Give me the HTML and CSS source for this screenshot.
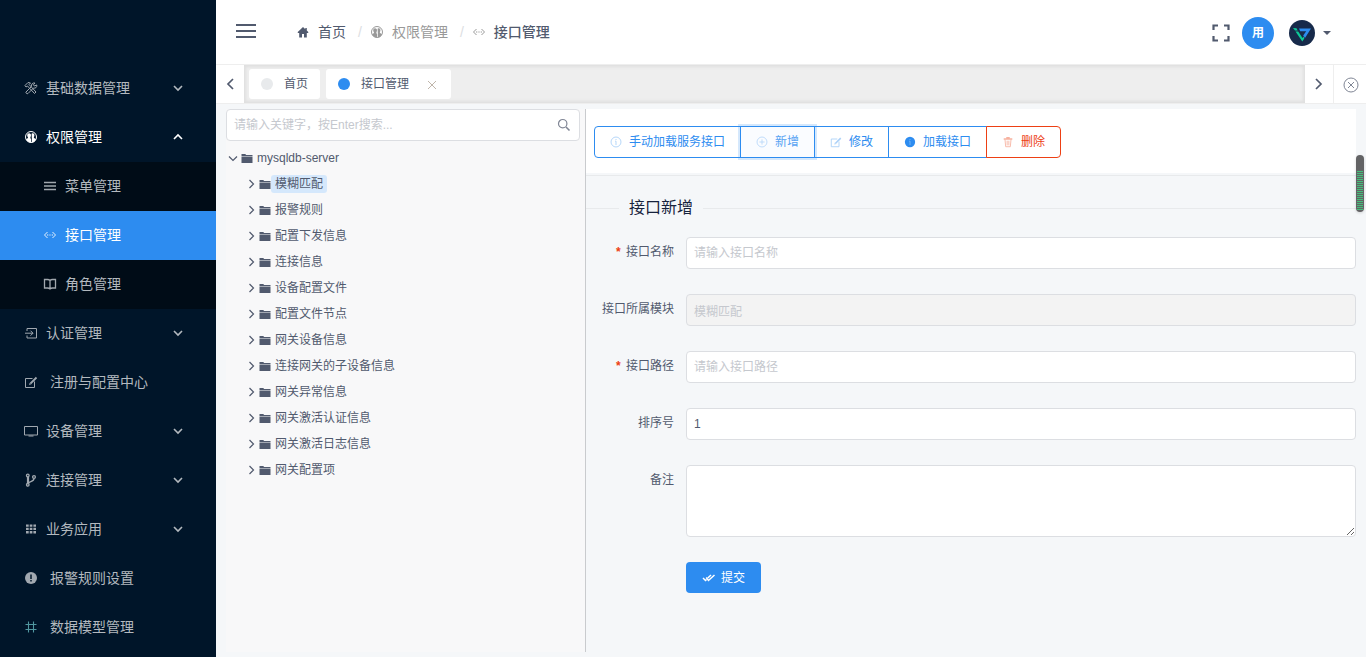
FILE: index.html
```
<!DOCTYPE html>
<html lang="zh-CN">
<head>
<meta charset="utf-8">
<title>接口管理</title>
<link rel="stylesheet" href="styles.css">
</head>
<body>
<svg class="sprite" aria-hidden="true">
  <symbol id="down" viewBox="0 0 12 12"><path d="M2 4l4 4 4-4" fill="none" stroke="currentColor" stroke-width="1.600"/></symbol>
  <symbol id="thin" viewBox="0 0 12 12"><path d="M2 4.500l4 4 4-4" fill="none" stroke="currentColor" stroke-width="1.200"/></symbol>
  <symbol id="up" viewBox="0 0 12 12"><path d="M2 8l4-4 4 4" fill="none" stroke="currentColor" stroke-width="1.600"/></symbol>
  <symbol id="tools" viewBox="0 0 14 14"><g fill="none" stroke="currentColor" stroke-width="1"><path d="M1 4.500l3-3 2.500 0.500-1.500 1.500 7 7.500-1.500 1.500-7-7.500-1.500 1z"/><path d="M2 11l5.500-5.500c-.500-2 1-4 3.500-3.500l-1.500 1.700.8 1.300 2.500-1c.3 2.500-1.500 3.500-3.300 3L4 12.500c-1 .7-2.500-.5-2-1.500z"/></g></symbol>
  <symbol id="people" viewBox="0 0 14 14"><circle cx="7" cy="7" r="5.500" fill="none" stroke="currentColor"/><path d="M7.600 3.700c1.500-.9 3 0 2.800 1.700-.1 1.200-.7 1.700-.5 2.300l2.200 1.700A5.400 5.400 0 0 1 8 12.500z" fill="currentColor"/><path d="M7.200 12.600C4.300 12.300 2.700 11 2 9.300l2-1.200c.3-.8-.8-1.400-.8-2.900 0-2 2-2.600 3.500-1.300C7.500 5 6.500 7 6.300 8l.9 1.200z" fill="currentColor"/></symbol>
  <symbol id="menu" viewBox="0 0 14 14"><path d="M1 3.500h12M1 7h12M1 10.500h12" stroke="currentColor" stroke-width="1.300"/></symbol>
  <symbol id="code" viewBox="0 0 14 14"><path d="M4.500 4l-3 3 3 3M9.500 4l3 3-3 3" fill="none" stroke="currentColor" stroke-width="1"/><path d="M4 7h1.300M6.400 7h1.200M8.700 7H10" stroke="currentColor" stroke-width="1.100"/></symbol>
  <symbol id="book" viewBox="0 0 14 14"><path d="M7 3.500Q6 2.500 4.500 2.500h-3v8.500h3Q6 11 7 12M7 3.500Q8 2.500 9.500 2.500h3v8.500h-3Q8 11 7 12M7 3.500V12" fill="none" stroke="currentColor" stroke-width="1.300"/></symbol>
  <symbol id="login" viewBox="0 0 14 14"><path d="M3 5V2.500h9.500v9.500H3V9.500M1 7.200h8M6.500 4.700L9 7.200 6.500 9.700" fill="none" stroke="currentColor"/></symbol>
  <symbol id="edit" viewBox="0 0 14 14"><path d="M8.500 3.500h-7v9h9v-6" fill="none" stroke="currentColor"/><path d="M12.500 2.500l-6 6" stroke="currentColor" stroke-width="1.800"/><path d="M5 10l.7-2.300 1.600 1.600z" fill="currentColor"/></symbol>
  <symbol id="monitor" viewBox="0 0 14 14"><path d="M.5 2.500h13v8.500H.5zM4.500 12h5" fill="none" stroke="currentColor"/></symbol>
  <symbol id="branch" viewBox="0 0 14 14"><g fill="none" stroke="currentColor" stroke-width="1.300"><circle cx="3.800" cy="2.500" r="1.300"/><circle cx="3.800" cy="11.800" r="1.300"/><circle cx="10" cy="4" r="1.400"/><path d="M10 5.500C10 9 5 8 4 10.500"/></g><path d="M4 3.800v7" stroke="currentColor" stroke-width="2.200"/></symbol>
  <symbol id="grid" viewBox="0 0 14 14"><path d="M2 2.500h2.700v2.300H2zM5.700 2.500h2.700v2.300H5.700zM9.400 2.500h2.600v2.300H9.400zM2 5.800h2.700v2.300H2zM5.700 5.800h2.700v2.300H5.700zM9.400 5.800h2.600v2.300H9.400zM2 9.100h2.700v2.300H2zM5.700 9.100h2.700v2.300H5.700zM9.400 9.100h2.600v2.300H9.400z" fill="currentColor"/></symbol>
  <symbol id="alert" viewBox="0 0 14 14"><circle cx="7" cy="7" r="6" fill="currentColor"/><path d="M7 3.500v4.500M7 9v1.500" stroke="#001529" stroke-width="1.500"/></symbol>
  <symbol id="hash" viewBox="0 0 14 14"><path d="M4.500 1.500v11M9.500 1.500v11M1.500 4.500h11M1.500 9.500h11" stroke="currentColor" stroke-width="1.100"/></symbol>
  <symbol id="home" viewBox="0 0 14 14"><path d="M7 2L1.500 7.300l.6.700H3.200v4.500H6V9h2v3.500h2.800V8h1.100l.6-.7-1.700-1.800V3H9.300v1.200z" fill="currentColor"/></symbol>
  <symbol id="folder" viewBox="0 0 12 12"><path d="M.5 2h3.700l1 1h6.300v1H.5zM.5 4.600h11v6.400H.5z" fill="currentColor"/></symbol>
  <symbol id="info" viewBox="0 0 14 14"><circle cx="7" cy="7" r="5.800" fill="none" stroke="currentColor"/><path d="M6 6h1v4.500M7 3.500v1.200" fill="none" stroke="currentColor"/></symbol>
  <symbol id="infofill" viewBox="0 0 14 14"><circle cx="7" cy="7" r="6" fill="currentColor"/><path d="M6 6h1v4.500M7 3.500v1.200" fill="none" stroke="#7ab8f7"/></symbol>
  <symbol id="plus" viewBox="0 0 14 14"><circle cx="7" cy="7" r="5.800" fill="none" stroke="currentColor"/><path d="M4 7h6M7 4v6" stroke="currentColor"/></symbol>
  <symbol id="trash" viewBox="0 0 14 14"><path d="M2 3.500h10M5 2h4" fill="none" stroke="currentColor" stroke-width="1.500"/><path d="M3.500 4l.8 8.500h5.400l.8-8.500M6 5.500v5.500M8 5.500v5.500" fill="none" stroke="currentColor"/></symbol>
  <symbol id="search" viewBox="0 0 14 14"><circle cx="5.700" cy="5.700" r="4.200" fill="none" stroke="currentColor" stroke-width="1.200"/><path d="M9 9l3.500 3.500" stroke="currentColor" stroke-width="1.600"/></symbol>
  <symbol id="checks" viewBox="0 0 14 14"><path d="M1 7l2.500 2.500 1-1M4.200 6.500l2.300 3 6-5.500M5.800 7L9 4" fill="none" stroke="currentColor" stroke-width="1.500"/></symbol>
</svg>
<div class="app">
  <nav class="side" aria-label="主菜单">
    <a class="item" href="#"><svg class="ic"><use href="#tools"/></svg><span>基础数据管理</span><svg class="arrow"><use href="#down"/></svg></a>
    <a class="item open" href="#"><svg class="ic"><use href="#people"/></svg><span>权限管理</span><svg class="arrow"><use href="#up"/></svg></a>
    <div class="sub">
      <a class="item" href="#"><svg class="ic"><use href="#menu"/></svg><span>菜单管理</span></a>
      <a class="item active" href="#"><svg class="ic"><use href="#code"/></svg><span>接口管理</span></a>
      <a class="item" href="#"><svg class="ic"><use href="#book"/></svg><span>角色管理</span></a>
    </div>
    <a class="item" href="#"><svg class="ic"><use href="#login"/></svg><span>认证管理</span><svg class="arrow"><use href="#down"/></svg></a>
    <a class="item leaf" href="#"><svg class="ic"><use href="#edit"/></svg><span>注册与配置中心</span></a>
    <a class="item" href="#"><svg class="ic"><use href="#monitor"/></svg><span>设备管理</span><svg class="arrow"><use href="#down"/></svg></a>
    <a class="item" href="#"><svg class="ic"><use href="#branch"/></svg><span>连接管理</span><svg class="arrow"><use href="#down"/></svg></a>
    <a class="item" href="#"><svg class="ic"><use href="#grid"/></svg><span>业务应用</span><svg class="arrow"><use href="#down"/></svg></a>
    <a class="item leaf" href="#"><svg class="ic"><use href="#alert"/></svg><span>报警规则设置</span></a>
    <a class="item leaf teal" href="#"><svg class="ic"><use href="#hash"/></svg><span>数据模型管理</span></a>
  </nav>
  <div class="page">
    <header class="head">
      <button class="burger" type="button" aria-label="折叠菜单"><svg viewBox="0 0 20 14" width="20" height="14"><path d="M0 1h20M0 7h20M0 13h20" stroke="currentColor" stroke-width="2"/></svg></button>
      <nav class="crumbs" aria-label="面包屑">
        <a class="crumb dark" href="#"><svg class="ic"><use href="#home"/></svg>首页</a><span class="sep">/</span>
        <a class="crumb" href="#"><svg class="ic"><use href="#people"/></svg>权限管理</a><span class="sep">/</span>
        <span class="crumb last"><svg class="ic"><use href="#code"/></svg><b>接口管理</b></span>
      </nav>
      <div class="user">
        <button type="button" aria-label="全屏"><svg viewBox="0 0 18 18" width="18" height="18"><path d="M1.500 6V1.500H6M12 1.500h4.500V6M16.500 12v4.500H12M6 16.500H1.500V12" fill="none" stroke="currentColor" stroke-width="2.200"/></svg></button>
        <span class="avatar">用</span>
        <button class="account" type="button" aria-label="账户">
          <svg viewBox="0 0 26 26" width="26" height="26"><circle cx="13" cy="13" r="13" fill="#172a4a"/><path d="M10 8.500h12L16 18l-1.800-2.500 3-4.300h-6z" fill="#2d8cf0"/><path d="M4 8l3.500.3 1.200 2.200H6zM6.500 11.500h2.700l4.300 6.500 1.300-1.500.5 2-2 3z" fill="#0dc997"/></svg>
          <svg viewBox="0 0 8 4" width="8" height="4"><path d="M0 0h8L4 4z" fill="currentColor"/></svg>
        </button>
      </div>
    </header>
    <div class="tabs">
      <button class="nav" type="button" aria-label="向左"><svg viewBox="0 0 8 12" width="8" height="12"><path d="M7 1L2 6l5 5" fill="none" stroke="currentColor" stroke-width="1.700"/></svg></button>
      <div class="strip">
        <a class="tab" href="#"><i class="dot"></i>首页</a>
        <a class="tab" href="#"><i class="dot on"></i>接口管理<svg class="x" viewBox="0 0 8 8" width="8" height="8"><path d="M0 0l8 8M8 0L0 8" stroke="currentColor"/></svg></a>
      </div>
      <button class="nav" type="button" aria-label="向右"><svg viewBox="0 0 8 12" width="8" height="12"><path d="M1 1l5 5-5 5" fill="none" stroke="currentColor" stroke-width="1.700"/></svg></button>
      <button class="nav close" type="button" aria-label="关闭标签"><svg viewBox="0 0 16 16" width="16" height="16"><circle cx="8" cy="8" r="7" fill="none" stroke="currentColor"/><path d="M5 5l6 6M11 5l-6 6" stroke="currentColor"/></svg></button>
    </div>
    <main class="content">
      <section class="left">
        <label class="search"><input type="text" aria-label="搜索" placeholder="请输入关键字，按Enter搜索..."><svg width="14" height="14"><use href="#search"/></svg></label>
        <ul class="tree">
          <li><div class="node"><svg><use href="#thin"/></svg><svg><use href="#folder"/></svg><span>mysqldb-server</span></div>
            <ul>
              <li class="node"><svg class="right"><use href="#thin"/></svg><svg><use href="#folder"/></svg><span class="picked">模糊匹配</span></li>
              <li class="node"><svg class="right"><use href="#thin"/></svg><svg><use href="#folder"/></svg><span>报警规则</span></li>
              <li class="node"><svg class="right"><use href="#thin"/></svg><svg><use href="#folder"/></svg><span>配置下发信息</span></li>
              <li class="node"><svg class="right"><use href="#thin"/></svg><svg><use href="#folder"/></svg><span>连接信息</span></li>
              <li class="node"><svg class="right"><use href="#thin"/></svg><svg><use href="#folder"/></svg><span>设备配置文件</span></li>
              <li class="node"><svg class="right"><use href="#thin"/></svg><svg><use href="#folder"/></svg><span>配置文件节点</span></li>
              <li class="node"><svg class="right"><use href="#thin"/></svg><svg><use href="#folder"/></svg><span>网关设备信息</span></li>
              <li class="node"><svg class="right"><use href="#thin"/></svg><svg><use href="#folder"/></svg><span>连接网关的子设备信息</span></li>
              <li class="node"><svg class="right"><use href="#thin"/></svg><svg><use href="#folder"/></svg><span>网关异常信息</span></li>
              <li class="node"><svg class="right"><use href="#thin"/></svg><svg><use href="#folder"/></svg><span>网关激活认证信息</span></li>
              <li class="node"><svg class="right"><use href="#thin"/></svg><svg><use href="#folder"/></svg><span>网关激活日志信息</span></li>
              <li class="node"><svg class="right"><use href="#thin"/></svg><svg><use href="#folder"/></svg><span>网关配置项</span></li>
            </ul>
          </li>
        </ul>
      </section>
      <section class="detail">
        <div class="bar">
          <button class="btn" type="button"><svg><use href="#info"/></svg>手动加载服务接口</button>
          <button class="btn focus" type="button"><svg><use href="#plus"/></svg>新增</button>
          <button class="btn" type="button"><svg><use href="#edit"/></svg>修改</button>
          <button class="btn" type="button"><svg class="solid"><use href="#infofill"/></svg>加载接口</button>
          <button class="btn danger" type="button"><svg><use href="#trash"/></svg>删除</button>
        </div>
        <h2 class="title">接口新增</h2>
        <form class="form">
          <label class="req" for="name">接口名称</label><input id="name" type="text" placeholder="请输入接口名称">
          <label for="module">接口所属模块</label><input id="module" type="text" value="模糊匹配" disabled>
          <label class="req" for="path">接口路径</label><input id="path" type="text" placeholder="请输入接口路径">
          <label for="order">排序号</label><input id="order" type="text" value="1">
          <label for="memo">备注</label><textarea id="memo"></textarea>
          <button class="submit" type="button"><svg><use href="#checks"/></svg>提交</button>
        </form>
      </section>
      <div class="thumb"></div>
    </main>
  </div>
</div>
</body>
</html>
```
FILE: styles.css
```
* { box-sizing: border-box; }
body { margin: 0; font: 12px/18px "Liberation Sans", "Noto Sans CJK SC", sans-serif; color: #515a6e; background: #f5f7f9; }
button, input, textarea { font: inherit; color: inherit; margin: 0; }
button { border: 0; padding: 0; background: none; cursor: pointer; }
a { color: inherit; text-decoration: none; }
ul { list-style: none; margin: 0; padding: 0; }
svg { flex: none; }
.sprite { position: absolute; width: 0; height: 0; }
.ic { width: 14px; height: 14px; }
.app { display: flex; min-height: 100vh; }

.side { width: 216px; flex: none; padding-top: 64px; background: #001529; color: #b3b9bf; font-size: 14px; }
.item { display: flex; align-items: center; gap: 8px; height: 49px; padding: 0 32px 2px 24px; }
.item.leaf { gap: 12px; }
.item .ic { opacity: .9; }
.item.open { color: #fff; }
.item.open .ic { opacity: 1; }
.arrow { width: 12px; height: 12px; margin-left: auto; }
.sub { background: #000c17; }
.sub .item { padding-left: 43px; }
.sub .active { background: #2d8cf0; color: #fff; }
.teal .ic { color: #5aa6ad; }

.page { flex: 1; min-width: 0; display: flex; flex-direction: column; }
.head { display: flex; align-items: center; height: 64px; padding: 0 35px 0 20px; background: #fff; }
.burger { display: flex; padding-bottom: 2px; }
.crumbs { display: flex; align-items: center; margin-left: 40px; font-size: 14px; color: #999; }
.crumb { display: flex; align-items: center; gap: 8px; }
.dark, .last b { color: #515a6e; }
.last b { font-weight: 500; }
.sep { padding: 0 8px 0 12px; color: #dcdee2; }
.user { display: flex; align-items: center; gap: 12px; margin-left: auto; padding-top: 2px; }
.user button { display: flex; align-items: center; }
.avatar { display: flex; align-items: center; justify-content: center; width: 32px; height: 32px; border-radius: 50%; background: #2d8cf0; color: #fff; font-weight: bold; }
.user .account { gap: 8px; padding-left: 3px; }

.tabs { display: flex; height: 40px; border: 1px solid #eee; border-width: 1px 0; background: #fff; }
.nav { display: flex; align-items: center; justify-content: center; width: 28px; }
.nav.close { width: 33px; padding: 2px 0 0 2px; border-left: 1px solid #eee; color: #808695; }
.strip { flex: 1; display: flex; gap: 6px; padding: 4px 5px; background: #eee; box-shadow: inset 0 0 3px 2px rgba(100,100,100,.1); }
.tab { display: flex; align-items: center; height: 30px; padding: 0 12px; border-radius: 3px; background: #fff; }
.dot { width: 12px; height: 12px; margin-right: 11px; border-radius: 50%; background: #e8eaec; }
.dot.on { background: #2d8cf0; }
.x { margin: 2px 3px 0 19px; color: #bfb5aa; }

.content { flex: 1; display: flex; position: relative; padding: 5px 10px; }
.left { flex: none; width: 32%; max-width: 360px; border-right: 1px solid #c9cbce; background: #f8f8f9; padding-right: 5px; }
.search { display: flex; align-items: center; height: 32px; padding: 0 8px 0 7px; border: 1px solid #dcdee2; border-radius: 4px; background: #fff; color: #808695; }
.search input { flex: 1; min-width: 0; padding: 0; border: 0; outline: 0; background: none; }
::placeholder { color: #c5c8ce; opacity: 1; }
.tree { padding: 4px 0 0 1px; }
.tree ul { padding-left: 18px; }
.node { display: flex; align-items: center; height: 26px; }
.node svg { width: 12px; height: 12px; margin-right: 2px; }
.node svg + svg { margin-right: 0; }
.node .right { transform: rotate(-90deg); }
.node span { padding: 0 4px; border-radius: 3px; }
.node .picked { background: #d5e8fc; }

.detail { flex: 1; min-width: 0; }
.bar { display: flex; padding: 17px 8px 15px; background: #fff; margin-bottom: 2px; }
.btn { display: flex; align-items: center; gap: 7px; height: 32px; padding: 0 15px; border: 1px solid #2d8cf0; color: #2d8cf0; background: #fff; }
.btn + .btn { margin-left: -1px; }
.btn svg { width: 12px; height: 12px; opacity: .4; }
.btn .solid { opacity: 1; }
.btn:first-child { border-radius: 4px 0 0 4px; }
.btn:last-child { border-radius: 0 4px 4px 0; }
.btn.focus { position: relative; z-index: 1; color: #57a3f3; background: #fafcff; box-shadow: 0 0 0 2px rgba(45,140,240,.2); }
.btn.danger { border-color: #ed4014; color: #ed4014; }
.title { display: flex; align-items: center; gap: 10px; margin: 0; padding-top: 20px; border-top: 1px solid #e8eaec; font-size: 16px; line-height: 24px; font-weight: 400; color: #17233d; }
.title::before, .title::after { content: ""; width: 33px; height: 1px; background: #e8eaec; }
.title::after { width: auto; flex: 1; }
.form { display: grid; grid-template-columns: 88px 1fr; gap: 25px 12px; padding-top: 17px; }
.form label { text-align: right; padding-top: 6px; }
.req::before { content: "*"; margin-right: 4px; color: #ed4014; font-family: "Liberation Mono", monospace; font-weight: bold; }
.form input, .form textarea { width: 100%; height: 32px; padding: 4px 7px; border: 1px solid #dcdee2; border-radius: 4px; background: #fff; }
.form textarea { display: block; height: 72px; }
.form input:disabled { background: #f3f3f3; color: #c5c8ce; }
.submit { grid-column: 2; justify-self: start; display: flex; align-items: center; gap: 5px; height: 31px; padding: 0 16px; border-radius: 4px; background: #2d8cf0; color: #fff; }
.submit svg { width: 14px; height: 14px; }
.thumb { position: absolute; right: 2px; top: 51px; width: 8px; height: 57px; padding: 16px 1px 2px; border-radius: 4px; background: #636365; box-shadow: 0 1px 3px rgba(0,0,0,.15); }
.thumb::before { content: ""; display: block; height: 100%; background: repeating-linear-gradient(#43c07a 0 1px, #636365 1px 2px); }
```
